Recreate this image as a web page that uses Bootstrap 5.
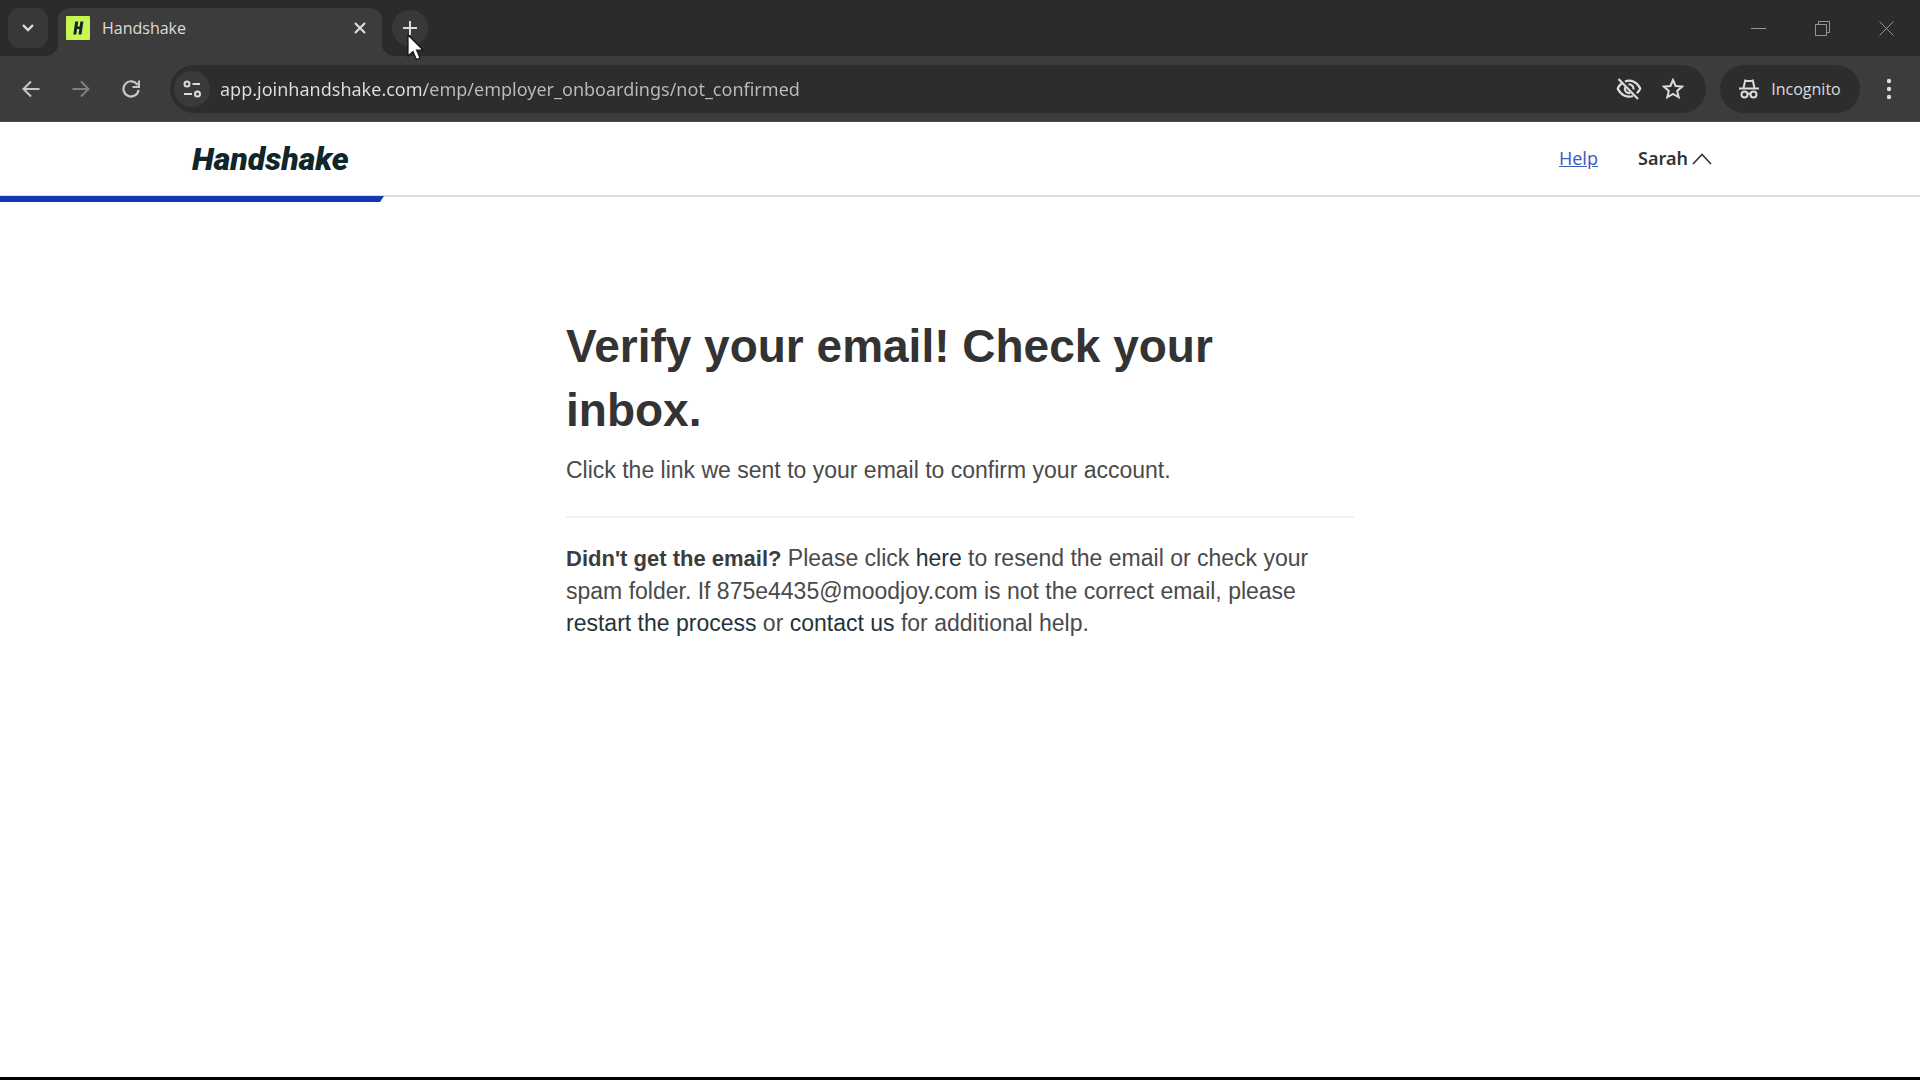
<!DOCTYPE html>
<html lang="en">
<head>
<meta charset="utf-8">
<meta name="viewport" content="width=device-width, initial-scale=1">
<title>Handshake</title>
<link href="https://cdn.jsdelivr.net/npm/bootstrap@5.3.0/dist/css/bootstrap.min.css" rel="stylesheet">
<style>
  :root { --strip: #2b2b2b; --bar: #3c3c3c; --field: #2d2d2d; --ink: #333333; }
  body { font-family: "Liberation Sans", Arial, sans-serif; background: #fff; color: #4a4a4a; border-bottom: 3px solid #000; }
  .chrome { font-family: "Open Sans", "Noto Sans", sans-serif; color: #dcdcdc; background: var(--strip); }
  .chrome button { border: 0; padding: 0; background: none; color: inherit; display: flex; align-items: center; justify-content: center; flex: none; }
  .chrome svg, .site-top svg { display: block; flex: none; }
  .tab-strip { height: 56px; padding: 0 2px 0 8px; }
  .tab-search { width: 40px; height: 40px; border-radius: 12px; }
  .chrome .tab-search, .chrome .new-tab { background: #383838; }
  .tab-open { width: 324px; height: 48px; margin-left: 10px; padding: 0 8px 8px; border-radius: 12px 12px 0 0; background: var(--bar); font-size: 16px; position: relative; }
  .tab-open::before, .tab-open::after { content: ""; position: absolute; bottom: 0; width: 12px; height: 12px; }
  .tab-open::before { left: -12px; background: radial-gradient(circle at 0 0, transparent 12px, var(--bar) 12px); }
  .tab-open::after { right: -12px; background: radial-gradient(circle at 100% 0, transparent 12px, var(--bar) 12px); }
  .new-tab { width: 36px; height: 36px; border-radius: 50%; margin-left: 10px; }
  .pointer { position: absolute; left: 25px; top: 24px; z-index: 2; }
  .chrome .win-btn { width: 64px; height: 56px; color: #969696; }
  .tool-row { height: 66px; background: var(--bar); padding: 0 12px 0 6px; border-bottom: 1px solid #4a4a4a; }
  .chrome .nav-btn { width: 50px; height: 40px; color: #c8c8c8; }
  .chrome .nav-btn:disabled { color: #808080; }
  .omnibox { height: 48px; border-radius: 24px; background: var(--field); margin-left: 14px; padding: 0 22px 0 4px; }
  .chrome .site-info { width: 36px; height: 36px; border-radius: 50%; background: #3a3a3a; }
  .address { font-family: "Noto Sans", sans-serif; border: 0; outline: 0; padding: 0; min-width: 0; margin-left: 10px; font-size: 18px; height: 32px; color: #c4c4c4;
    background: linear-gradient(90deg, #e0e0e0 206px, #bcbcbc 206px); -webkit-background-clip: text; background-clip: text; -webkit-text-fill-color: transparent; }
  .chrome .bookmark { margin-left: 20px; }
  .chrome .incognito { height: 48px; width: 140px; border-radius: 24px; background: var(--field); margin-left: 14px; gap: 12px; font-size: 16px; }
  .chrome .menu-btn { width: 38px; height: 40px; margin-left: 10px; }
  .site-top { height: 75px; padding: 0 208px 0 192px; border-bottom: 2px solid #dedede; }
  .wordmark { font-family: Roboto, "Liberation Sans", sans-serif; font-weight: 900; font-style: italic; font-size: 32px; line-height: 40px; color: #10262a; }
  .top-links { font-family: "Noto Sans", sans-serif; font-size: 18px; gap: 40px; }
  .top-links a { color: #3f5fc0; }
  .top-links button { color: var(--ink); font-weight: 600; gap: 4px; border: 0; padding: 0; background: none; }
  .step-bar { height: 6px; width: 20%; margin-top: -1px; background: #1238b8; clip-path: polygon(0 0, 100% 0, calc(100% - 4px) 100%, 0 100%); }
  .notice { width: 100%; max-width: 788px; margin: 112px auto 0; font-size: 23px; line-height: 32px; }
  .notice h1 { font-size: 46px; line-height: 64px; font-weight: 700; color: var(--ink); max-width: 700px; margin: 0 0 12px; }
  .notice p { margin: 0; }
  .notice hr { margin: 30px 0 24px; border-top: 2px solid #f0f0f0; opacity: 1; }
  .notice strong { color: #3c3c3c; font-size: 22px; }
  .notice a { color: #26323a; text-decoration: none; }
</style>
<script src="https://cdn.jsdelivr.net/npm/bootstrap@5.3.0/dist/js/bootstrap.bundle.min.js"></script>
</head>
<body class="min-vh-100 d-flex flex-column">

<div class="chrome">
  <div class="tab-strip d-flex align-items-center">
    <button class="tab-search" type="button" aria-label="Search tabs">
      <svg width="12" height="8" viewBox="0 0 12 8" fill="none" stroke="currentColor" stroke-width="2.4"><path d="M1 1l5 5 5-5"/></svg>
    </button>
    <div class="tab-open d-flex align-items-center align-self-end">
      <svg width="24" height="24" viewBox="0 0 24 24"><rect width="24" height="24" rx="1" fill="#c8f751"/><path d="M9.200 5.500h3L11.500 10.500h2.200L14.400 5.500h3L15.500 18.500h-3L13.300 13h-2.200L10.300 18.500h-3z" fill="#10262a"/></svg>
      <span class="ms-2 ps-1 flex-grow-1">Handshake</span>
      <button type="button" aria-label="Close tab" class="px-2">
        <svg width="12" height="12" viewBox="0 0 12 12" fill="none" stroke="currentColor" stroke-width="2.200"><path d="M1 1l10 10M11 1L1 11"/></svg>
      </button>
    </div>
    <div class="position-relative">
      <button class="new-tab" type="button" aria-label="New tab">
        <svg width="16" height="16" viewBox="0 0 16 16" stroke="currentColor" stroke-width="2"><path d="M8 1v14M1 8h14"/></svg>
      </button>
      <svg class="pointer" width="17" height="28" viewBox="0 0 17 28"><path d="M1 1v21l5-4.500 3.400 8 3.600-1.500-3.400-7.800H16z" fill="#fff" stroke="#111" stroke-width="1.200"/></svg>
    </div>
    <div class="d-flex ms-auto">
      <button class="win-btn" type="button" aria-label="Minimize"><svg width="15" height="15" viewBox="0 0 15 15" stroke="currentColor"><path d="M0 7.500h15"/></svg></button>
      <button class="win-btn" type="button" aria-label="Restore"><svg width="15" height="15" viewBox="0 0 15 15" fill="none" stroke="currentColor"><path d="M.5 3.500h11v11H.5zM3.500 3.500v-3h11v11h-3"/></svg></button>
      <button class="win-btn" type="button" aria-label="Close"><svg width="15" height="15" viewBox="0 0 15 15" stroke="currentColor"><path d="M.5.5l14 14M14.500.5l-14 14"/></svg></button>
    </div>
  </div>

  <div class="tool-row d-flex align-items-center">
    <button class="nav-btn" type="button" aria-label="Back"><svg width="18" height="18" viewBox="0 0 18 18" fill="none" stroke="currentColor" stroke-width="2"><path d="M17.500 9H2M9 1.500L1.500 9 9 16.500"/></svg></button>
    <button class="nav-btn" type="button" aria-label="Forward" disabled><svg width="18" height="18" viewBox="0 0 18 18" fill="none" stroke="currentColor" stroke-width="2"><path d="M.5 9H16M9 1.500L16.500 9 9 16.500"/></svg></button>
    <button class="nav-btn" type="button" aria-label="Reload"><svg width="18" height="18" viewBox="0 0 18 18" fill="none" stroke="currentColor" stroke-width="2.200"><path d="M15.500 4.800A7.600 7.600 0 1 0 16.600 10M17 .5v6.500h-6.500"/></svg></button>
    <div class="omnibox d-flex align-items-center flex-grow-1">
      <button class="site-info" type="button" aria-label="View site information"><svg width="18" height="18" viewBox="0 0 18 18" fill="none" stroke="currentColor" stroke-width="2"><circle cx="4" cy="4" r="2.500"/><path d="M9.500 4H17M1 14h8"/><circle cx="14.500" cy="14" r="2.500"/></svg></button>
      <input class="address flex-grow-1" type="text" aria-label="Address" value="app.joinhandshake.com/emp/employer_onboardings/not_confirmed" spellcheck="false">
      <button type="button" aria-label="Third-party cookies blocked"><svg width="26" height="22" viewBox="0 0 26 22" fill="none" stroke="currentColor" stroke-width="2.200"><path d="M9 3.400C15 1 21.500 4.500 24.300 10.500c-.8 1.800-2 3.400-3.500 4.700M17 18C11 20 4.500 17 1.700 10.500 2.600 8.500 4 6.700 5.700 5.500"/><path d="M2.500 1l19.500 20"/><path d="M9 9.300a4.500 4.500 0 0 0 5.300 5.700M12.500 6.300a4.500 4.500 0 0 1 5 5.200"/></svg></button>
      <button type="button" aria-label="Bookmark this tab" class="bookmark"><svg width="22" height="22" viewBox="0 0 22 22" fill="none" stroke="currentColor" stroke-width="2"><path d="M11 2l2.600 6 6.500.6-4.900 4.300 1.500 6.400L11 15.900l-5.700 3.400 1.500-6.400L1.900 8.600 8.400 8z"/></svg></button>
    </div>
    <button class="incognito" type="button">
      <svg width="20" height="20" viewBox="0 0 20 20" fill="none" stroke="currentColor" stroke-width="2"><path d="M0 9.500h20M4.500 9l1.700-7.500 2 .6h3.600l2-.6L15.500 9"/><circle cx="5.500" cy="15.500" r="3"/><circle cx="14.500" cy="15.500" r="3"/><path d="M8.500 15q1.500-1 3 0"/></svg>
      <span>Incognito</span>
    </button>
    <button class="menu-btn" type="button" aria-label="Menu"><svg width="6" height="22" viewBox="0 0 6 22" fill="currentColor"><circle cx="3" cy="3" r="2.200"/><circle cx="3" cy="11" r="2.200"/><circle cx="3" cy="19" r="2.200"/></svg></button>
  </div>
</div>

<header class="site-top d-flex align-items-center justify-content-between">
  <a class="wordmark text-decoration-none" href="#">Handshake</a>
  <nav class="top-links d-flex align-items-center">
    <a href="#">Help</a>
    <button type="button" class="d-flex align-items-center">Sarah
      <svg width="20" height="12" viewBox="0 0 20 12" fill="none" stroke="currentColor" stroke-width="1.600"><path d="M1 11l9-9.500L19 11"/></svg>
    </button>
  </nav>
</header>
<div class="step-bar" role="progressbar" aria-label="Onboarding progress" aria-valuenow="20" aria-valuemin="0" aria-valuemax="100"></div>

<main class="notice">
  <h1>Verify your email! Check your inbox.</h1>
  <p>Click the link we sent to your email to confirm your account.</p>
  <hr>
  <p><strong>Didn't get the email?</strong> Please click <a href="#">here</a> to resend the email or check your spam folder. If 875e4435@moodjoy.com is not the correct email, please <a href="#">restart the process</a> or <a href="#">contact us</a> for additional help.</p>
</main>

</body>
</html>
